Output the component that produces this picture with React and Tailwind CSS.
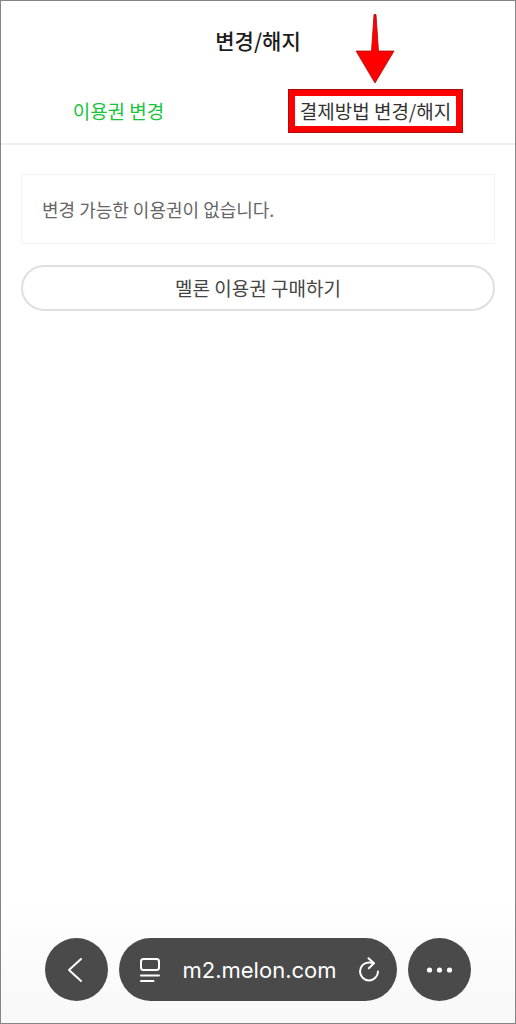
import React, { useState } from "react";

const tabs = [
  { id: "pass", label: "이용권 변경" },
  { id: "payment", label: "결제방법 변경/해지", marked: true },
];

function Marker() {
  return (
    <>
      <span className="pointer-events-none absolute -inset-x-3 -inset-y-2 border-[7px] border-[#fe0000] outline outline-1 -outline-offset-1 outline-[#a80f0f]" />
      <svg
        className="pointer-events-none absolute bottom-full left-1/2 mb-[13px] -translate-x-1/2"
        width="40"
        height="70"
        viewBox="0 0 40 70"
        aria-hidden="true"
      >
        <path
          d="M19 .5h2L23.500 37H39L20 69 1 37h15.500z"
          fill="#fe0000"
          stroke="#a80f0f"
          strokeWidth="0.8"
        />
      </svg>
    </>
  );
}

function PageIcon() {
  return (
    <svg width="22" height="26" viewBox="0 0 22 26" fill="none" stroke="#fff" strokeWidth="2" strokeLinecap="round">
      <rect x="2" y="2" width="18" height="11" rx="2.500" />
      <path d="M2 18.500h18M2 24h12.500" />
    </svg>
  );
}

function ReloadIcon() {
  return (
    <svg width="22" height="26" viewBox="0 0 22 26" fill="none" stroke="#fff" strokeWidth="2" strokeLinecap="round" strokeLinejoin="round">
      <path d="M15.500 6.200C14 5.600 12.500 5.400 11 5.400A9 9 0 1 0 20 14.500" />
      <path d="M10.500 1.200L16 6.300L10.800 11.300" />
    </svg>
  );
}

export default function App() {
  const [active, setActive] = useState("pass");

  return (
    <div className="flex min-h-screen flex-col border border-[#858585] bg-white font-['Noto_Sans_CJK_KR',sans-serif]">
      <header className="pt-6">
        <h1 className="text-center text-[21px] leading-[30px] font-medium text-[#1c1c1c]">
          변경/해지
        </h1>
        <nav className="mt-[42px] grid grid-cols-2 border-b-2 border-[#eeeeee] pb-[18px]">
          {tabs.map((tab) => (
            <div key={tab.id} className="flex justify-center pr-[22px]">
              <button
                type="button"
                onClick={() => setActive(tab.id)}
                className={`relative text-[19px] leading-[28px] whitespace-nowrap ${
                  active === tab.id ? "text-[#19c43c]" : "text-[#333333]"
                }`}
              >
                {tab.label}
                {tab.marked && <Marker />}
              </button>
            </div>
          ))}
        </nav>
      </header>

      <main className="px-5 pt-[29px]">
        <p className="border border-[#f3f3f3] px-5 py-[20px] text-[18px] leading-[28px] text-[#666666]">
          변경 가능한 이용권이 없습니다.
        </p>
        <button
          type="button"
          className="mt-[21px] h-[46px] w-full rounded-full border-2 border-[#dfdfdf] text-[19px] leading-[28px] text-[#444444]"
        >
          멜론 이용권 구매하기
        </button>
      </main>

      <footer className="mt-auto flex gap-[11px] bg-linear-to-b from-white to-[#f8f8f8] px-11 pt-10 pb-[22px] text-white">
        <button type="button" aria-label="뒤로" className="flex size-[63px] shrink-0 items-center justify-center rounded-full bg-[#4a4a4a]">
          <svg width="20" height="26" viewBox="0 0 20 26" fill="none" stroke="#fff" strokeWidth="2" strokeLinecap="round" strokeLinejoin="round">
            <path d="M14 2L2 13L14 24" />
          </svg>
        </button>
        <div className="flex h-[63px] min-w-0 flex-1 items-center justify-between rounded-full bg-[#4a4a4a] pr-[17px] pl-5">
          <button type="button" aria-label="페이지 메뉴">
            <PageIcon />
          </button>
          <span className="font-['Inter',sans-serif] text-[22px] leading-[28px]">m2.melon.com</span>
          <button type="button" aria-label="새로고침">
            <ReloadIcon />
          </button>
        </div>
        <button type="button" aria-label="더보기" className="flex size-[63px] shrink-0 items-center justify-center rounded-full bg-[#4a4a4a]">
          <svg width="28" height="8" viewBox="0 0 28 8" fill="#fff">
            <circle cx="3.500" cy="4" r="2.600" />
            <circle cx="13.500" cy="4" r="2.600" />
            <circle cx="23.500" cy="4" r="2.600" />
          </svg>
        </button>
      </footer>
    </div>
  );
}
